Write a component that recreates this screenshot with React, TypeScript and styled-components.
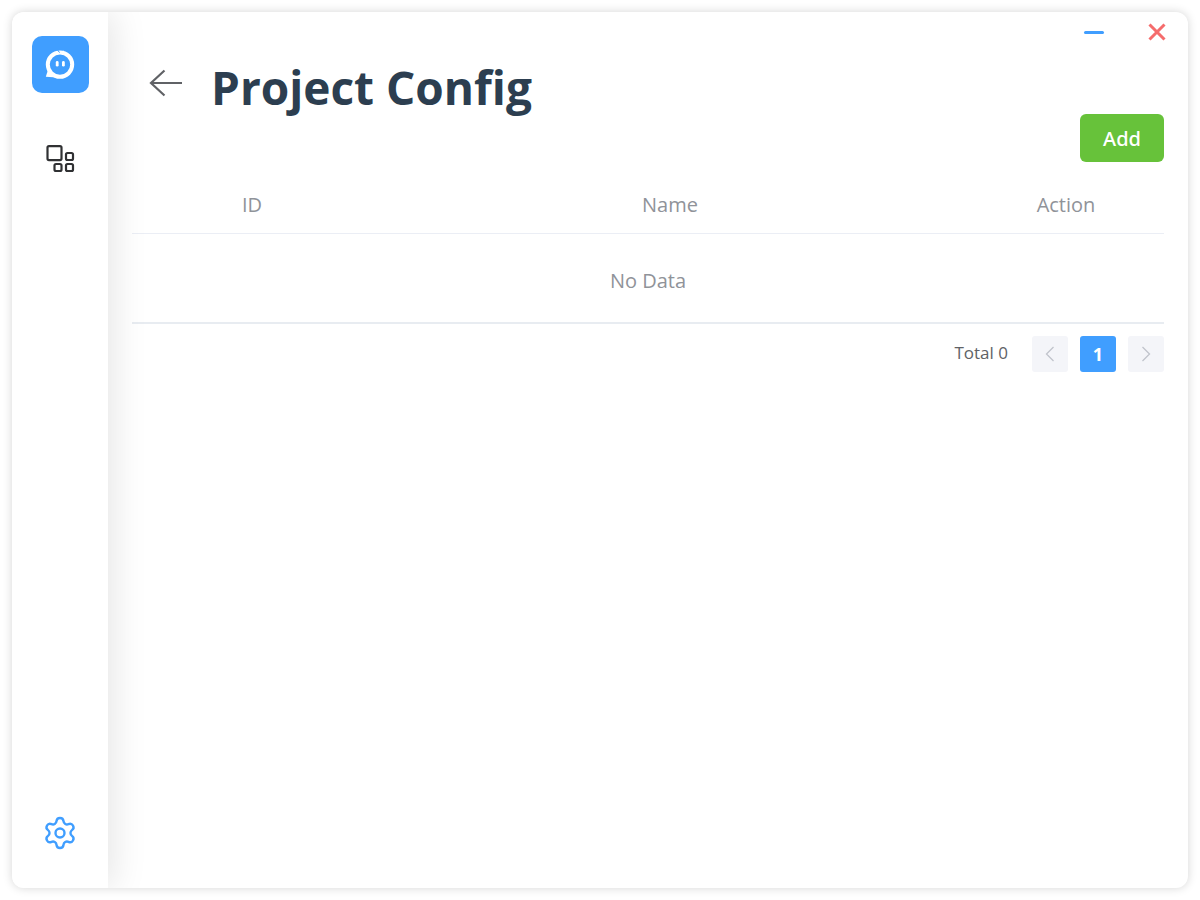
import React from 'react'
import styled, { createGlobalStyle } from 'styled-components'
import { Settings } from 'lucide-react'

const GlobalStyle = createGlobalStyle`
  html, body {
    margin: 0;
    padding: 0;
    height: 100%;
    background: #fff;
    font-family: 'Open Sans', 'Noto Sans', 'Liberation Sans', sans-serif;
  }
  * { box-sizing: border-box; }
`

const Page = styled.div`
  width: 1200px;
  height: 900px;
  padding: 12px;
`

const Window = styled.div`
  display: flex;
  width: 1176px;
  height: 876px;
  background: #fff;
  border-radius: 12px;
  overflow: hidden;
  box-shadow: 0 0 10px rgba(0, 0, 0, 0.17);
`

const Sidebar = styled.aside`
  position: relative;
  z-index: 1;
  flex: 0 0 96px;
  display: flex;
  flex-direction: column;
  align-items: center;
  padding: 24px 0 37px;
  background: #fff;
  box-shadow: 6px 0 34px rgba(0, 0, 0, 0.1);
`

const Logo = styled.div`
  width: 57px;
  height: 57px;
  border-radius: 10px;
  background: #409eff;
  display: flex;
  align-items: center;
  justify-content: center;
`

const NavItem = styled.button`
  margin-top: 52px;
  padding: 0;
  border: 0;
  background: none;
  display: flex;
`

const SettingsItem = styled.button`
  margin-top: auto;
  padding: 0;
  border: 0;
  background: none;
  display: flex;
  color: #409eff;
`

const Main = styled.main`
  flex: 1;
  display: flex;
  flex-direction: column;
  padding: 0 24px;
`

const WindowControls = styled.div`
  height: 40px;
  display: flex;
  justify-content: flex-end;
  align-items: center;
  gap: 44px;
  margin-right: -2px;
`

const Minimize = styled.span`
  width: 20px;
  height: 3px;
  border-radius: 2px;
  background: #409eff;
`

const Header = styled.header`
  height: 62px;
  display: flex;
  align-items: center;
  gap: 28px;
  padding-left: 17px;
`

const Title = styled.h1`
  margin: 7px 0 0;
  font-size: 46px;
  line-height: 72px;
  font-weight: 700;
  color: #2c3e50;
  white-space: nowrap;
`

const Toolbar = styled.div`
  display: flex;
  justify-content: flex-end;
`

const AddButton = styled.button`
  width: 84px;
  height: 48px;
  border: 0;
  border-radius: 6px;
  background: #67c23a;
  color: #fff;
  font-family: 'Noto Sans', 'Open Sans', sans-serif;
  font-size: 20px;
  font-weight: 500;
`

const TableRow = styled.div`
  display: grid;
  grid-template-columns: 240px 1fr 196px;
  margin-top: 15px;
  height: 57px;
  padding-bottom: 2px;
  align-items: center;
  border-bottom: 1px solid #ebeef5;
`

const HeadCell = styled.div`
  text-align: center;
  font-size: 20px;
  color: #909399;
`

const EmptyRow = styled.div`
  height: 90px;
  padding-top: 4px;
  display: flex;
  align-items: center;
  justify-content: center;
  font-size: 20px;
  color: #909399;
  border-bottom: 2px solid #e8ecf1;
`

const Pagination = styled.nav`
  margin-top: 12px;
  display: flex;
  align-items: center;
  justify-content: flex-end;
  gap: 12px;
`

const Total = styled.span`
  margin: 0 12px 3px 0;
  font-size: 17px;
  color: #606266;
`

const PageButton = styled.button<{ $active?: boolean }>`
  width: 36px;
  height: 36px;
  padding: 0;
  border: 0;
  border-radius: 3px;
  display: flex;
  align-items: center;
  justify-content: center;
  font-family: inherit;
  font-size: 18px;
  font-weight: 700;
  background: ${(p) => (p.$active ? '#409eff' : '#f4f5f9')};
  color: ${(p) => (p.$active ? '#fff' : '#c0c4cc')};
`

const LogoIcon = () => (
  <svg width="30" height="30" viewBox="0 0 30 30" fill="none">
    <circle cx="15" cy="14.6" r="12.2" stroke="#fff" strokeWidth="4" />
    <path d="M3 20 L0.8 26.8 L12 27.6 Z" fill="#fff" />
    <path d="M14 3.6 L18.6 0.4 L19.4 4 Z" fill="#fff" />
    <path d="M12.5 0 L14.6 2.6" stroke="#409eff" strokeWidth="1" />
    <rect x="10.8" y="11" width="2.8" height="5.6" rx="1.4" fill="#fff" />
    <rect x="17" y="11" width="2.8" height="5.6" rx="1.4" fill="#fff" />
  </svg>
)

const AppsIcon = () => (
  <svg width="29" height="28" viewBox="0 0 29 28" fill="none" stroke="#303133" strokeWidth="2.2">
    <rect x="1.5" y="1.1" width="14" height="14" rx="1.5" />
    <rect x="20" y="8" width="7" height="7" rx="1.5" />
    <rect x="8.5" y="19" width="7" height="7" rx="1.5" />
    <rect x="20" y="19" width="7" height="7" rx="1.5" />
  </svg>
)

const BackIcon = () => (
  <svg width="34" height="28" viewBox="0 0 34 28" fill="none" stroke="#606266" strokeWidth="2.2">
    <path d="M33 14 H2" />
    <path d="M15.5 1.5 L2 14 L15.5 26.5" />
  </svg>
)

const CloseIcon = () => (
  <svg width="18" height="18" viewBox="0 0 18 18" fill="none" stroke="#f56c6c" strokeWidth="3">
    <path d="M1.5 1.5 L16.5 16.5 M16.5 1.5 L1.5 16.5" />
  </svg>
)

const Chevron = ({ dir }: { dir: 'left' | 'right' }) => (
  <svg width="10" height="16" viewBox="0 0 10 16" fill="none" stroke="#c0c4cc" strokeWidth="1.3">
    <path d={dir === 'left' ? 'M8.5 1 L1.5 8 L8.5 15' : 'M1.5 1 L8.5 8 L1.5 15'} />
  </svg>
)

const App = () => {
  return (
    <Page>
      <GlobalStyle />
      <Window>
        <Sidebar>
          <Logo>
            <LogoIcon />
          </Logo>
          <NavItem>
            <AppsIcon />
          </NavItem>
          <SettingsItem>
            <Settings size={36} strokeWidth={1.6} />
          </SettingsItem>
        </Sidebar>
        <Main>
          <WindowControls>
            <Minimize />
            <CloseIcon />
          </WindowControls>
          <Header>
            <BackIcon />
            <Title>Project Config</Title>
          </Header>
          <Toolbar>
            <AddButton>Add</AddButton>
          </Toolbar>
          <TableRow>
            <HeadCell>ID</HeadCell>
            <HeadCell>Name</HeadCell>
            <HeadCell>Action</HeadCell>
          </TableRow>
          <EmptyRow>No Data</EmptyRow>
          <Pagination>
            <Total>Total 0</Total>
            <PageButton>
              <Chevron dir="left" />
            </PageButton>
            <PageButton $active>1</PageButton>
            <PageButton>
              <Chevron dir="right" />
            </PageButton>
          </Pagination>
        </Main>
      </Window>
    </Page>
  )
}

export default App
